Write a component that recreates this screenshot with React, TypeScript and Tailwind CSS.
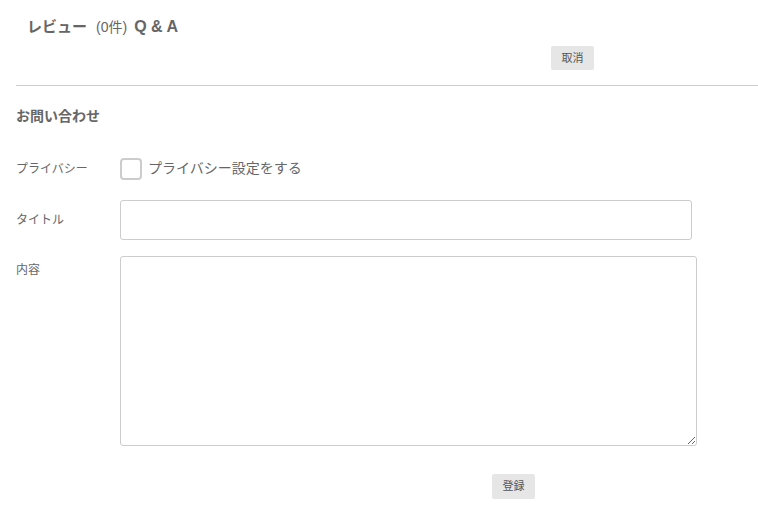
export default function App() {
  return (
    <div
      className="w-[758px] h-[516px] bg-white text-[#666] overflow-hidden"
      style={{ fontFamily: '"Liberation Sans", "Noto Sans CJK JP", sans-serif' }}
    >
      {/* TABS */}
      <div className="pl-[27px] pt-[15px] flex items-baseline h-[22px]">
        <span className="text-[15px] font-bold">レビュー</span>
        <span className="text-[14px] ml-[9px]">(0件)</span>
        <span className="text-[16px] font-bold ml-[7px]">Q &amp; A</span>
      </div>

      <div className="pl-[551px] pt-[23px]">
        <button className="w-[43px] h-[24px] bg-[#e6e6e6] rounded-[2px] text-[11px] text-[#555]">
          取消
        </button>
      </div>

      <div className="ml-[16px] mt-[15px] border-t border-[#ccc]" />

      {/* FORM */}
      <div className="pl-[16px]">
        <h2 className="text-[14px] font-bold mt-[20px] leading-[20px]">お問い合わせ</h2>

        <div className="flex items-center mt-[31px] h-[23px]">
          <span className="w-[104px] text-[12px]">プライバシー</span>
          <span className="w-[22px] h-[22px] border-2 border-[#ccc] rounded-[4px]" />
          <span className="ml-[6px] text-[14px]">プライバシー設定をする</span>
        </div>

        <div className="flex items-center mt-[20px]">
          <span className="w-[104px] text-[12px]">タイトル</span>
          <input className="w-[572px] h-[40px] border border-[#ccc] rounded-[3px] outline-none" />
        </div>

        <div className="flex items-start mt-[16px]">
          <span className="w-[104px] text-[12px] mt-[5px]">内容</span>
          <textarea className="w-[577px] h-[190px] border border-[#ccc] rounded-[3px] outline-none resize" />
        </div>

        <div className="pl-[476px] mt-[27px]">
          <button className="w-[43px] h-[25px] bg-[#e6e6e6] rounded-[2px] text-[11px] text-[#555]">
            登録
          </button>
        </div>
      </div>
    </div>
  );
}
